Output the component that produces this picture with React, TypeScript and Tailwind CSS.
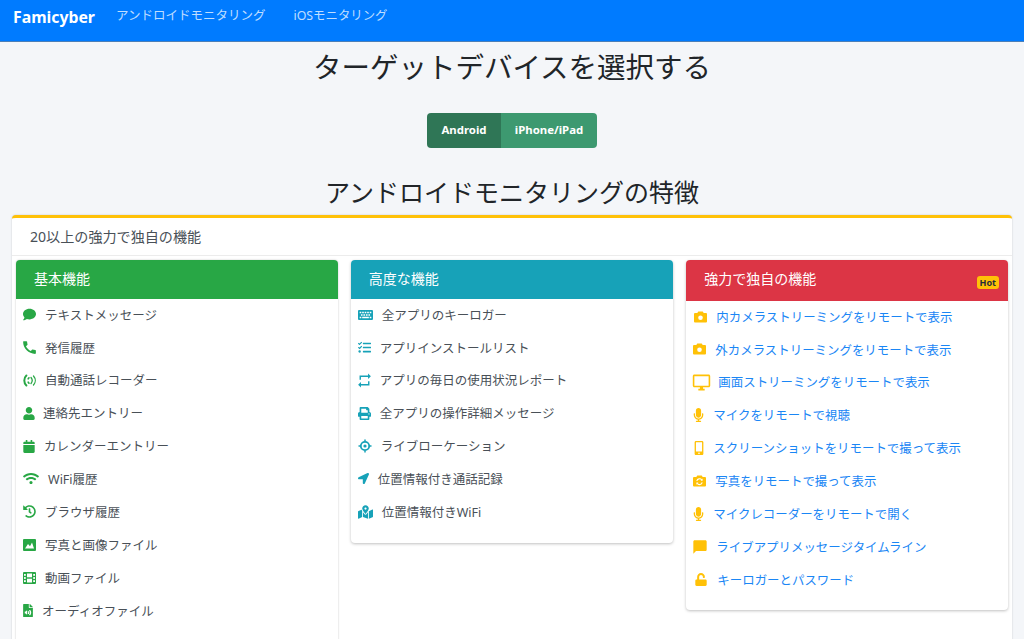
import React from "react";
import {
  FaComment, FaUser, FaCalendar, FaWifi, FaHistory, FaFileAudio,
  FaKeyboard, FaTasks, FaPrint, FaLocationArrow, FaMapMarkedAlt,
  FaMicrophone, FaMobileAlt, FaUnlock,
} from "react-icons/fa";
import { MdCall, MdRepeat, MdChatBubble, MdOutlineDesktopWindows } from "react-icons/md";

type Item = { icon: React.ReactNode; label: string; box: string };

const g = "text-[#28a745]";
const c = "text-[#17a2b8]";
const y = "text-[#ffc107]";

function CallRec() {
  return (
    <svg viewBox="0 0 14 13" className="w-[14px] h-[13px] shrink-0" fill="none" stroke="currentColor">
      <path d="M3.4 1.5 C0.6 4 0.6 9 3.4 11.5" strokeWidth="2" strokeLinecap="round" />
      <path d="M5.2 4.8 L6 3.8 M5.2 8.2 L6 9.2" strokeWidth="1.6" strokeLinecap="round" />
      <path d="M8 3.5 C9.4 5.2 9.4 7.8 8 9.5" strokeWidth="1.3" strokeLinecap="round" />
      <path d="M10.5 2 C12.8 4.6 12.8 8.4 10.5 11" strokeWidth="1.3" strokeLinecap="round" />
    </svg>
  );
}

function Picture() {
  return (
    <svg viewBox="0 0 13 12" className="w-[13px] h-[12px] shrink-0">
      <rect width="13" height="12" rx="1" fill="currentColor" />
      <path d="M2 9.5 L5 5 L7 7.2 L9 3.5 L11 9.5 Z" fill="#fff" />
    </svg>
  );
}

function Film() {
  return (
    <svg viewBox="0 0 13 12" className="w-[13px] h-[12px] shrink-0">
      <rect width="13" height="12" rx="1" fill="currentColor" />
      <rect x="4" y="1.5" width="5" height="3.8" fill="#fff" />
      <rect x="4" y="6.7" width="5" height="3.8" fill="#fff" />
      <rect x="1" y="2" width="1.8" height="1.8" fill="#fff" />
      <rect x="1" y="5.1" width="1.8" height="1.8" fill="#fff" />
      <rect x="1" y="8.2" width="1.8" height="1.8" fill="#fff" />
      <rect x="10.2" y="2" width="1.8" height="1.8" fill="#fff" />
      <rect x="10.2" y="5.1" width="1.8" height="1.8" fill="#fff" />
      <rect x="10.2" y="8.2" width="1.8" height="1.8" fill="#fff" />
    </svg>
  );
}

function Target() {
  return (
    <svg viewBox="0 0 14 14" className="w-[14px] h-[14px] shrink-0" fill="none" stroke="currentColor">
      <circle cx="7" cy="7" r="4.2" strokeWidth="1.8" />
      <circle cx="7" cy="7" r="1.6" fill="currentColor" stroke="none" />
      <path d="M7 0.5 V2.5 M7 11.5 V13.5 M0.5 7 H2.5 M11.5 7 H13.5" strokeWidth="1.5" />
    </svg>
  );
}

function Camera() {
  return (
    <svg viewBox="0 0 13 12" className="w-[13px] h-[12px] shrink-0">
      <path d="M4.3 0.5 H8.7 L9.7 2 H12 A1 1 0 0 1 13 3 V10.5 A1 1 0 0 1 12 11.5 H1 A1 1 0 0 1 0 10.5 V3 A1 1 0 0 1 1 2 H3.3 Z" fill="currentColor" />
      <circle cx="6.5" cy="6.7" r="2.3" fill="#fff" />
    </svg>
  );
}

function CameraSwitch() {
  return (
    <svg viewBox="0 0 13 12" className="w-[13px] h-[12px] shrink-0">
      <path d="M4.3 0.5 H8.7 L9.7 2 H12 A1 1 0 0 1 13 3 V10.5 A1 1 0 0 1 12 11.5 H1 A1 1 0 0 1 0 10.5 V3 A1 1 0 0 1 1 2 H3.3 Z" fill="currentColor" />
      <path d="M3.8 6 A2.8 2.8 0 0 1 8.8 5 M9.2 7.4 A2.8 2.8 0 0 1 4.2 8.4" fill="none" stroke="#fff" strokeWidth="1.1" />
      <path d="M9.6 3.6 V5.8 H7.6 Z M3.4 9.8 V7.6 H5.4 Z" fill="#fff" />
    </svg>
  );
}

const Mic = () => <FaMicrophone className="w-[11px] h-[14px] shrink-0" />;

const basic: Item[] = [
  { icon: <FaComment className="w-[13px] h-[13px] shrink-0" />, label: "テキストメッセージ", box: "w-[13px]" },
  { icon: <MdCall className="w-[17px] h-[17px] shrink-0" />, label: "発信履歴", box: "w-[13px]" },
  { icon: <CallRec />, label: "自動通話レコーダー", box: "w-[13px]" },
  { icon: <FaUser className="w-[12px] h-[13px] shrink-0" />, label: "連絡先エントリー", box: "w-[11px]" },
  { icon: <FaCalendar className="w-[12px] h-[13px] shrink-0" />, label: "カレンダーエントリー", box: "w-[12px]" },
  { icon: <FaWifi className="w-[16px] h-[13px] shrink-0" />, label: "WiFi履歴", box: "w-[16px]" },
  { icon: <FaHistory className="w-[13px] h-[13px] shrink-0" />, label: "ブラウザ履歴", box: "w-[13px]" },
  { icon: <Picture />, label: "写真と画像ファイル", box: "w-[13px]" },
  { icon: <Film />, label: "動画ファイル", box: "w-[13px]" },
  { icon: <FaFileAudio className="w-[10px] h-[13px] shrink-0" />, label: "オーディオファイル", box: "w-[10px]" },
];

const advanced: Item[] = [
  { icon: <FaKeyboard className="w-[15px] h-[14px] shrink-0" />, label: "全アプリのキーロガー", box: "w-[15px]" },
  { icon: <FaTasks className="w-[13px] h-[13px] shrink-0" />, label: "アプリインストールリスト", box: "w-[13px]" },
  { icon: <MdRepeat className="w-[17px] h-[17px] shrink-0" />, label: "アプリの毎日の使用状況レポート", box: "w-[13px]" },
  { icon: <FaPrint className="w-[13px] h-[13px] shrink-0" />, label: "全アプリの操作詳細メッセージ", box: "w-[13px]" },
  { icon: <Target />, label: "ライブローケーション", box: "w-[14px]" },
  { icon: <FaLocationArrow className="w-[11px] h-[11px] shrink-0" />, label: "位置情報付き通話記録", box: "w-[11px]" },
  { icon: <FaMapMarkedAlt className="w-[15px] h-[14px] shrink-0" />, label: "位置情報付きWiFi", box: "w-[15px]" },
];

const powerful: Item[] = [
  { icon: <Camera />, label: "内カメラストリーミングをリモートで表示", box: "w-[14px]" },
  { icon: <Camera />, label: "外カメラストリーミングをリモートで表示", box: "w-[13px]" },
  { icon: <MdOutlineDesktopWindows className="w-[19px] h-[19px] shrink-0" />, label: "画面ストリーミングをリモートで表示", box: "w-[16px]" },
  { icon: <Mic />, label: "マイクをリモートで視聴", box: "w-[11px]" },
  { icon: <FaMobileAlt className="w-[10px] h-[14px] shrink-0" />, label: "スクリーンショットをリモートで撮って表示", box: "w-[11px]" },
  { icon: <CameraSwitch />, label: "写真をリモートで撮って表示", box: "w-[13px]" },
  { icon: <Mic />, label: "マイクレコーダーをリモートで開く", box: "w-[11px]" },
  { icon: <MdChatBubble className="w-[16px] h-[16px] shrink-0" />, label: "ライブアプリメッセージタイムライン", box: "w-[14px]" },
  { icon: <FaUnlock className="w-[14px] h-[13px] shrink-0" />, label: "キーロガーとパスワード", box: "w-[15px]" },
];

function List({ items, color, text }: { items: Item[]; color: string; text: string }) {
  return (
    <ul className="pt-[0.6px]">
      {items.map((it) => (
        <li key={it.label} className={`flex items-center h-[32.9px] pl-[7px] gap-[9px] ${text}`}>
          <span className={`flex justify-center shrink-0 mb-[3px] ${it.box} ${color}`}>{it.icon}</span>
          <span>{it.label}</span>
        </li>
      ))}
    </ul>
  );
}

export default function App() {
  return (
    <div className="h-[639px] overflow-hidden bg-[#f4f6f9] text-[#212529] font-['Noto_Sans','Noto_Sans_CJK_JP',sans-serif]">
      <nav className="h-[42px] bg-[#007bff] border-b border-[#4b7fb8] flex items-start pl-[13px]">
        <a className="text-[15.8px] font-bold text-white leading-[34px]">Famicyber</a>
        <a className="ml-[21px] text-[12.5px] text-white/75 leading-[31px]">アンドロイドモニタリング</a>
        <a className="ml-[28px] text-[12.4px] text-white/75 leading-[31px]">iOSモニタリング</a>
      </nav>

      <h1 className="text-[28.5px] leading-[48px] text-center mt-[1px]">ターゲットデバイスを選択する</h1>

      <div className="flex justify-center mt-[22px]">
        <div className="flex h-[35px] rounded-[4px] overflow-hidden text-[11.4px] font-bold text-white">
          <button className="w-[74px] pb-[2px] bg-[#2f7656]">Android</button>
          <button className="w-[96px] pb-[2px] bg-[#3d9970]">iPhone/iPad</button>
        </div>
      </div>

      <h2 className="text-[25px] leading-[40px] text-center mt-[24px]">アンドロイドモニタリングの特徴</h2>

      <section className="mx-[12px] mt-[3px] h-[500px] bg-white border-t-[3px] border-[#ffc107] rounded-[4px] shadow-[0_0_2px_rgba(0,0,0,0.2)]">
        <div className="h-[38px] pl-[18px] flex items-center text-[14.1px] text-[#495057] border-b border-[#ececec]">
          20以上の強力で独自の機能
        </div>
        <div className="flex items-start gap-[13px] px-[4px] pt-[4px]">
          <div className="w-[322px] h-[400px] bg-white rounded-[4px] shadow-[0_0_2px_rgba(0,0,0,0.25)]">
            <div className="h-[39px] pb-[2px] bg-[#28a745] text-white text-[14px] flex items-center pl-[18px] rounded-t-[4px]">基本機能</div>
            <List items={basic} color={g} text="text-[12.5px] text-[#495057]" />
          </div>
          <div className="w-[323px] pb-[13.4px] bg-white rounded-[4px] shadow-[0_1px_3px_rgba(0,0,0,0.25)]">
            <div className="h-[39px] pb-[2px] bg-[#17a2b8] text-white text-[14px] flex items-center pl-[18px] rounded-t-[4px]">高度な機能</div>
            <List items={advanced} color={c} text="text-[12.5px] text-[#495057]" />
          </div>
          <div className="w-[322px] pb-[12.4px] bg-white rounded-[4px] shadow-[0_1px_3px_rgba(0,0,0,0.25)]">
            <div className="h-[41px] bg-[#dc3545] text-white text-[14px] flex items-center justify-between pl-[18px] pr-[9px] rounded-t-[4px]">
              <span className="mb-[4px]">強力で独自の機能</span>
              <span className="mt-[3px] bg-[#ffc107] text-[#1f2d3d] text-[9px] font-bold rounded-[3px] px-[3px] leading-[13px]">Hot</span>
            </div>
            <List items={powerful} color={y} text="text-[12.45px] text-[#1a86f5]" />
          </div>
        </div>
      </section>
    </div>
  );
}
